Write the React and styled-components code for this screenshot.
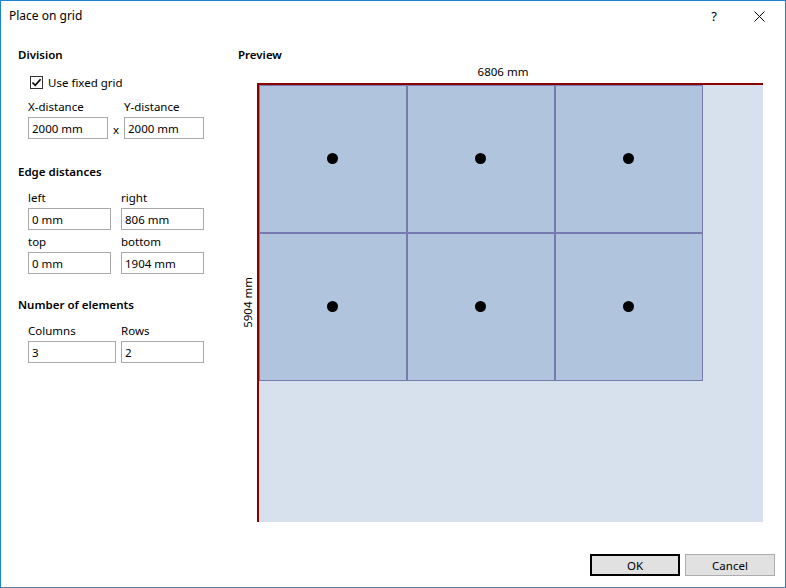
import React from "react";
import styled, { createGlobalStyle } from "styled-components";

const GlobalStyle = createGlobalStyle`
  * { box-sizing: border-box; }
  html, body { margin: 0; padding: 0; background: #fff; }
  body {
    font-family: "Noto Sans", "Open Sans", sans-serif;
    font-size: 11.5px;
    color: #000;
  }
`;

const Window = styled.div`
  width: 786px;
  height: 588px;
  display: flex;
  flex-direction: column;
  background: #fff;
  border: 1px solid #1883d7;
  border-bottom-color: #4f7fae;
`;

const TitleBar = styled.div`
  height: 30px;
  display: flex;
  align-items: center;
  padding-left: 8px;
  font-size: 12px;
`;

const Title = styled.div`
  flex: 1;
  line-height: 16px;
`;

const CaptionButton = styled.div`
  width: ${(p) => p.$w || 46}px;
  height: 30px;
  display: flex;
  align-items: center;
  justify-content: center;
  font-size: 13px;
`;

const Body = styled.div`
  display: flex;
  padding: 16px 0 0 17px;
`;

const Settings = styled.div`
  width: 220px;
  display: flex;
  flex-direction: column;
`;

const Heading = styled.div`
  font-weight: 600;
  line-height: 16px;
  margin-top: ${(p) => p.$top || 0}px;
`;

const Group = styled.div`
  padding-left: 10px;
  display: flex;
  flex-direction: column;
`;

const CheckRow = styled.label`
  display: flex;
  align-items: center;
  gap: 5px;
  height: 16px;
  margin: 11px 0 0 2px;
`;

const Box = styled.span`
  width: 13px;
  height: 13px;
  border: 1px solid #333;
  background: #fff;
  display: flex;
  align-items: center;
  justify-content: center;
`;

const FieldRow = styled.div`
  display: flex;
  align-items: flex-end;
  gap: ${(p) => p.$gap || 0}px;
  margin-top: ${(p) => p.$top || 0}px;
`;

const Field = styled.div`
  width: ${(p) => p.$w}px;
  display: flex;
  flex-direction: column;
`;

const FieldLabel = styled.div`
  line-height: 16px;
  margin-bottom: 2px;
`;

const Input = styled.input`
  height: 22px;
  width: 100%;
  border: 1px solid #a9a9a9;
  padding: 0 3px;
  font: inherit;
  color: #000;
  background: #fff;
  outline: none;
`;

const Times = styled.span`
  width: 16px;
  height: 22px;
  line-height: 26px;
  text-align: center;
`;

const PreviewPane = styled.div`
  width: 530px;
  display: flex;
  flex-direction: column;
`;

const WidthLabel = styled.div`
  text-align: center;
  line-height: 16px;
  margin-top: 1px;
`;

const PreviewRow = styled.div`
  display: flex;
  margin-top: 3px;
`;

const HeightLabel = styled.div`
  width: 19px;
  display: flex;
  align-items: center;
  justify-content: center;
  span {
    writing-mode: vertical-rl;
    transform: rotate(180deg);
    line-height: 16px;
  }
`;

const Canvas = styled.div`
  width: 506px;
  height: 439px;
  background: #d7e1ee;
  border-top: 2px solid #8b0000;
  border-left: 2px solid #8b0000;
`;

const Grid = styled.div`
  display: grid;
  grid-template-columns: repeat(${(p) => p.$cols}, 148px);
  grid-auto-rows: 148px;
  width: max-content;
`;

const Cell = styled.div`
  background: #b0c4de;
  border: 1px solid rgba(72, 61, 139, 0.55);
  display: flex;
  align-items: center;
  justify-content: center;
`;

const Dot = styled.span`
  width: 11px;
  height: 11px;
  border-radius: 50%;
  background: #000;
  margin: 0 2px 2px 0;
`;

const Footer = styled.div`
  margin-top: auto;
  display: flex;
  justify-content: flex-end;
  gap: 5px;
  padding: 0 10px 11px 0;
`;

const Button = styled.button`
  width: 90px;
  height: 22px;
  background: #e1e1e1;
  border: ${(p) => (p.$default ? "2px solid #000" : "1px solid #adadad")};
  font: inherit;
  color: #000;
  padding: 0;
`;

function Check() {
  return (
    <svg width="11" height="11" viewBox="0 0 11 11">
      <path d="M1.5 5.5 L4.2 8.3 L9.6 2.2" fill="none" stroke="#000" strokeWidth="1.7" />
    </svg>
  );
}

function CloseGlyph() {
  return (
    <svg width="11" height="11" viewBox="0 0 11 11">
      <path d="M0.5 0.5 L10.5 10.5 M10.5 0.5 L0.5 10.5" stroke="#000" strokeWidth="1" />
    </svg>
  );
}

function TextField({ label, value, w }) {
  return (
    <Field $w={w}>
      <FieldLabel>{label}</FieldLabel>
      <Input defaultValue={value} />
    </Field>
  );
}

export default function App() {
  const cols = 3;
  const rows = 2;
  const cells = Array.from({ length: cols * rows });

  return (
    <>
      <GlobalStyle />
      <Window>
        <TitleBar>
          <Title>Place on grid</Title>
          <CaptionButton $w={44}>?</CaptionButton>
          <CaptionButton>
            <CloseGlyph />
          </CaptionButton>
          <span style={{ width: 3 }} />
        </TitleBar>
        <Body>
          <Settings>
            <Heading>Division</Heading>
            <Group>
              <CheckRow>
                <Box>
                  <Check />
                </Box>
                Use fixed grid
              </CheckRow>
              <FieldRow $top={9}>
                <TextField label="X-distance" value="2000 mm" w={80} />
                <Times>x</Times>
                <TextField label="Y-distance" value="2000 mm" w={80} />
              </FieldRow>
            </Group>

            <Heading $top={25}>Edge distances</Heading>
            <Group>
              <FieldRow $top={10} $gap={10}>
                <TextField label="left" value="0 mm" w={83} />
                <TextField label="right" value="806 mm" w={83} />
              </FieldRow>
              <FieldRow $top={4} $gap={10}>
                <TextField label="top" value="0 mm" w={83} />
                <TextField label="bottom" value="1904 mm" w={83} />
              </FieldRow>
            </Group>

            <Heading $top={23}>Number of elements</Heading>
            <Group>
              <FieldRow $top={10} $gap={5}>
                <TextField label="Columns" value="3" w={88} />
                <TextField label="Rows" value="2" w={83} />
              </FieldRow>
            </Group>
          </Settings>

          <PreviewPane>
            <Heading>Preview</Heading>
            <WidthLabel>6806 mm</WidthLabel>
            <PreviewRow>
              <HeightLabel>
                <span>5904 mm</span>
              </HeightLabel>
              <Canvas>
                <Grid $cols={cols}>
                  {cells.map((_, i) => (
                    <Cell key={i}>
                      <Dot />
                    </Cell>
                  ))}
                </Grid>
              </Canvas>
            </PreviewRow>
          </PreviewPane>
        </Body>
        <Footer>
          <Button $default>OK</Button>
          <Button>Cancel</Button>
        </Footer>
      </Window>
    </>
  );
}
